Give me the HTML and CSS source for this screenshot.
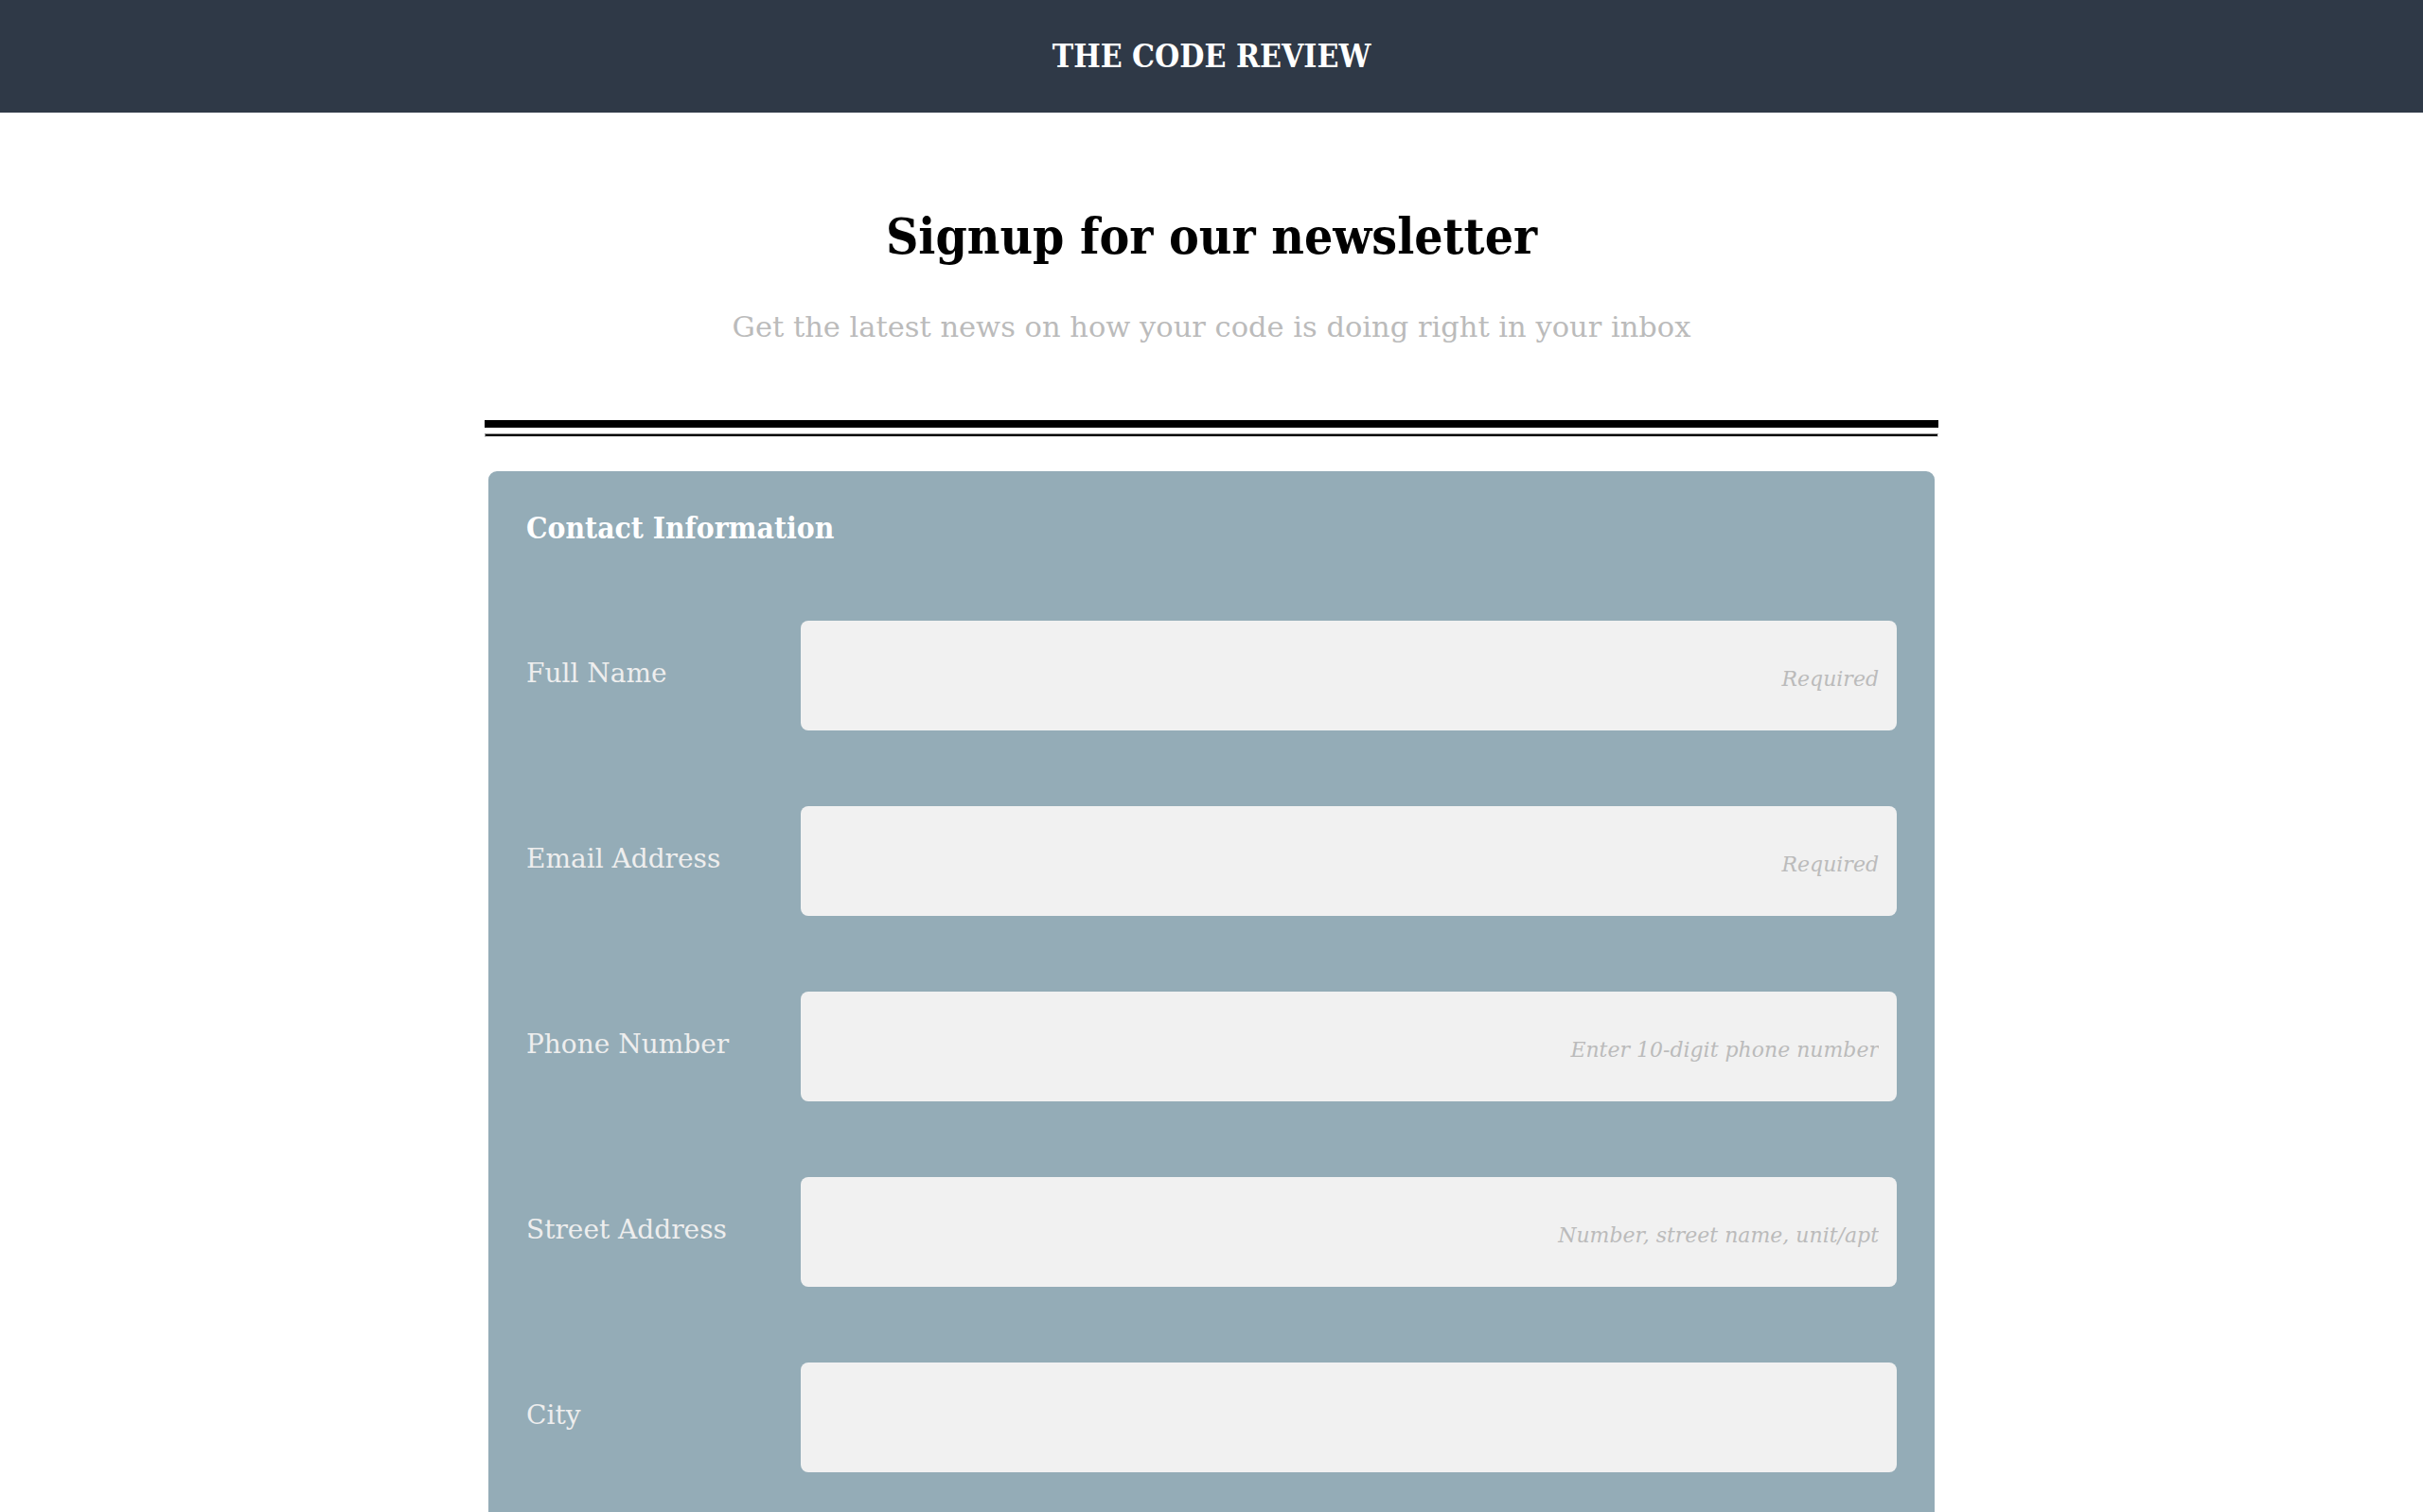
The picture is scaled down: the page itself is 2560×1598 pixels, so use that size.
FILE: index.html
```html
<!DOCTYPE html>
<html lang="en">
<head>
<meta charset="utf-8">
<title>The Code Review</title>
<link rel="stylesheet" href="styles.css">
</head>
<body>
<header class="topbar">
  <h2 class="brand">THE CODE REVIEW</h2>
</header>
<main class="page">
  <h1 class="title">Signup for our newsletter</h1>
  <p class="subtitle">Get the latest news on how your code is doing right in your inbox</p>
  <div class="rule"><div class="rule-line"></div></div>
  <form class="card">
    <h3 class="card-title">Contact Information</h3>
    <div class="row">
      <label class="label" for="name">Full Name</label>
      <input class="field" id="name" type="text" placeholder="Required">
    </div>
    <div class="row">
      <label class="label" for="email">Email Address</label>
      <input class="field" id="email" type="email" placeholder="Required">
    </div>
    <div class="row">
      <label class="label" for="phone">Phone Number</label>
      <input class="field" id="phone" type="tel" placeholder="Enter 10-digit phone number">
    </div>
    <div class="row">
      <label class="label" for="street">Street Address</label>
      <input class="field" id="street" type="text" placeholder="Number, street name, unit/apt">
    </div>
    <div class="row">
      <label class="label" for="city">City</label>
      <input class="field" id="city" type="text">
    </div>
  </form>
</main>
</body>
</html>
```
FILE: styles.css
```css
* { box-sizing: border-box; }
body {
  margin: 0;
  font-family: "DejaVu Serif", "Liberation Serif", serif;
  background: #ffffff;
  color: #000;
}
.topbar {
  height: 119px;
  background: #2f3947;
  display: flex;
  align-items: center;
  justify-content: center;
}
.brand {
  margin: 0;
  color: #ffffff;
  font-family: "DejaVu Serif Condensed", "DejaVu Serif", serif;
  font-stretch: condensed;
  font-size: 33.5px;
  font-weight: 700;
}
.page {
  width: 1536px;
  margin: 0 auto;
}
.title {
  margin: 0;
  padding-top: 95px;
  text-align: center;
  font-family: "DejaVu Serif Condensed", "DejaVu Serif", serif;
  font-stretch: condensed;
  font-size: 53px;
  font-weight: 700;
  line-height: 70px;
}
.subtitle {
  margin: 42px 0 0;
  text-align: center;
  font-size: 30.5px;
  line-height: 40px;
  color: #bbbbbb;
}
.rule {
  margin-top: 78px;
  border-top: 8px solid #000;
  padding-top: 6px;
}
.rule-line {
  height: 4px;
  background: #000;
  border-top: 1px solid #999;
  border-left: 1px solid #999;
  border-bottom: 1px solid #ddd;
  border-right: 1px solid #ddd;
}
.card {
  margin: 36px 4px 0;
  background: #94acb7;
  border-radius: 9px;
  padding: 40px 40px 60px;
}
.card-title {
  margin: 0 0 78px;
  color: #ffffff;
  font-family: "DejaVu Serif Condensed", "DejaVu Serif", serif;
  font-stretch: condensed;
  font-size: 31.5px;
  font-weight: 700;
  line-height: 40px;
}
.row {
  display: flex;
  align-items: center;
  margin-bottom: 80px;
}
.label {
  width: 290px;
  flex: none;
  padding-bottom: 6px;
  color: #eeeeee;
  font-size: 28px;
}
.field {
  flex: 1;
  height: 116px;
  border: none;
  border-radius: 8px;
  background: #f1f1f1;
  padding: 6px 19px 0;
  text-align: right;
  font-family: inherit;
  font-size: 22px;
}
.field::placeholder {
  color: #bbbbbb;
  font-style: italic;
}
```
